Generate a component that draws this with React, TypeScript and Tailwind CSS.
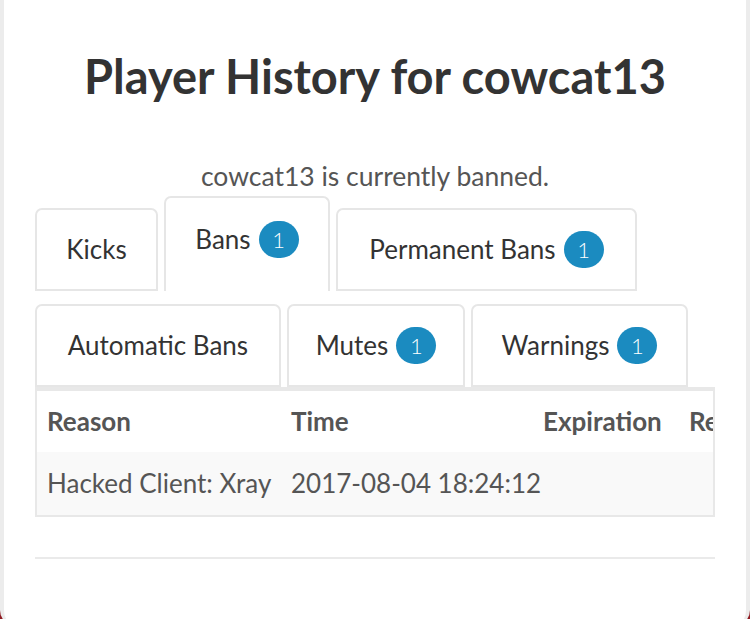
import React from 'react'

type Tab = {
    label: string;
    count?: number;
    width: string;
    active?: boolean;
};

const rowOne: Tab[] = [
    { label: "Kicks", width: "w-[123px]" },
    { label: "Bans", count: 1, width: "w-[166px]", active: true },
    { label: "Permanent Bans", count: 1, width: "w-[301px]" },
];

const rowTwo: Tab[] = [
    { label: "Automatic Bans", width: "w-[246px]" },
    { label: "Mutes", count: 1, width: "w-[178px]" },
    { label: "Warnings", count: 1, width: "w-[217px]" },
];

const Badge = ({ count }: { count: number }) => (
    <span className="ml-2 inline-flex h-[37px] w-[40px] items-center justify-center rounded-full bg-[#1b8bc0] text-[22px] font-light text-white">
        {count}
    </span>
);

const TabItem = ({ tab }: { tab: Tab }) => {
    if (tab.active) {
        return (
            <div className={`${tab.width} flex h-[95px] items-start justify-center rounded-t-[7px] border-2 border-b-0 border-[#e6e6e6] bg-white pt-[22px] text-[#333]`}>
                <span className="flex items-center">
                    {tab.label}
                    {tab.count !== undefined && <Badge count={tab.count} />}
                </span>
            </div>
        );
    }
    return (
        <div className={`${tab.width} flex h-[83px] items-center justify-center rounded-t-[7px] border-2 border-[#e6e6e6] bg-white text-[#333]`}>
            {tab.label}
            {tab.count !== undefined && <Badge count={tab.count} />}
        </div>
    );
};

const App = () => {
    return (
        <div className="h-[619px] w-[750px] overflow-hidden bg-[#8e1b22]" style={{ fontFamily: "Lato, 'Open Sans', sans-serif" }}>
            <div className="h-[626px] rounded-b-2xl border-x-4 border-[#ececec] bg-white px-[31px]">
                <h1 className="pt-[46px] text-center text-[47px] font-bold leading-[60px] text-[#333]">
                    Player History for cowcat13
                </h1>

                <p className="mt-[54px] text-center text-[26.5px] leading-[32px] text-[#555]">
                    cowcat13 is currently banned.
                </p>

                <div className="mt-[4px] flex flex-col gap-[13px] text-[26px]">
                    <div className="flex items-end gap-[6px]">
                        {rowOne.map((t) => <TabItem key={t.label} tab={t} />)}
                    </div>
                    <div className="flex items-end gap-[6px]">
                        {rowTwo.map((t) => <TabItem key={t.label} tab={t} />)}
                    </div>
                </div>

                <div className="overflow-hidden border-2 border-t-[4px] border-[#e8e8e8] text-[26px] text-[#555]">
                    <div className="flex h-[61px] w-[900px] items-center font-bold">
                        <div className="w-[254px] pl-[10px]">Reason</div>
                        <div className="w-[252px]">Time</div>
                        <div className="w-[146px]">Expiration</div>
                        <div className="w-[200px]">Reason</div>
                    </div>
                    <div className="flex h-[63px] w-[900px] items-center bg-[#f9f9f9]">
                        <div className="w-[254px] pl-[10px]">Hacked Client: Xray</div>
                        <div className="w-[252px]">2017-08-04 18:24:12</div>
                        <div className="w-[146px]"></div>
                        <div className="w-[200px]"></div>
                    </div>
                </div>

                <div className="mt-[40px] h-[2px] bg-[#eaeaea]" />
            </div>
        </div>
    );
};

export default App
